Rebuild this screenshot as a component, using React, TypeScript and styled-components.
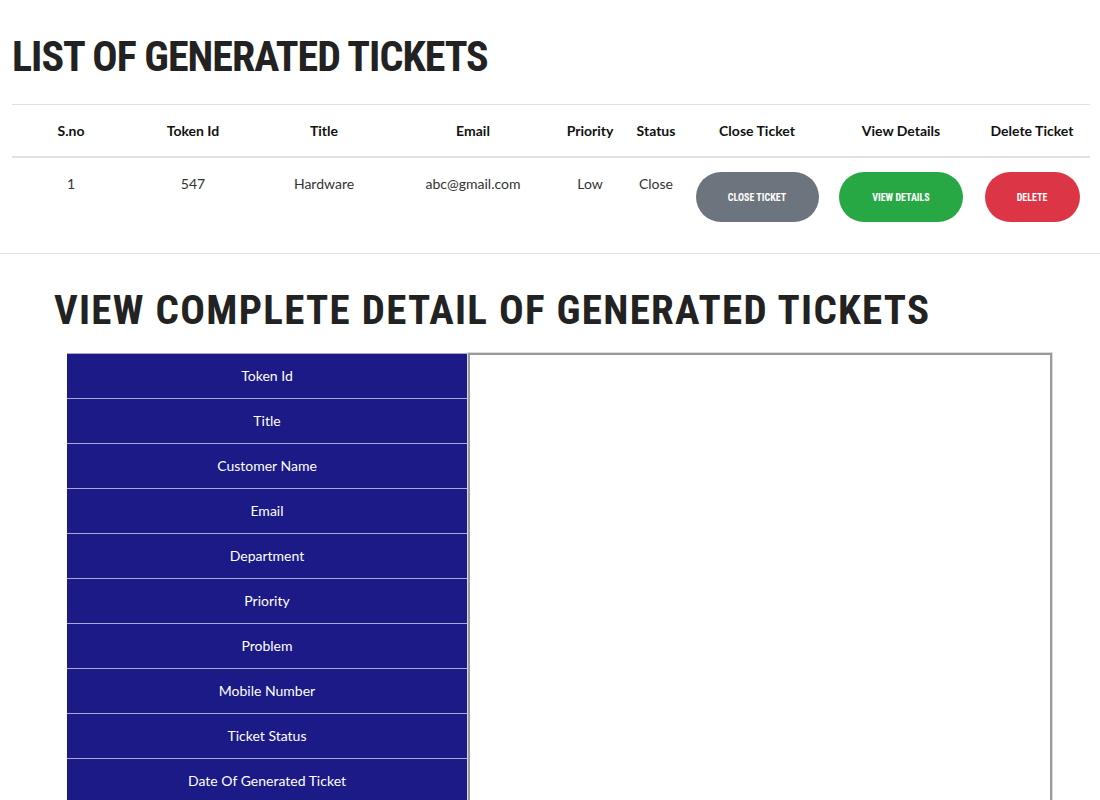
import React from 'react';
import styled, { createGlobalStyle } from 'styled-components';

const GlobalStyle = createGlobalStyle`
	body {
		margin: 0;
		background: #fff;
		font-family: 'Lato', 'Noto Sans', sans-serif;
		color: #212529;
	}
	*, *::before, *::after {
		box-sizing: border-box;
	}
`;

const Page = styled.div`
	width: 1100px;
	overflow: hidden;
`;

const ListSection = styled.section`
	padding: 0 10px 0 12px;
`;

const Heading = styled.h1<{ $spacing?: number; $size: number }>`
	margin: 0;
	font-family: 'Roboto Condensed', 'Liberation Sans Narrow', 'DejaVu Sans Condensed', Roboto, sans-serif;
	font-weight: 700;
	font-size: ${(p) => p.$size}px;
	line-height: 1.2;
	letter-spacing: ${(p) => p.$spacing || 0}px;
	color: #222;
	text-transform: uppercase;
	white-space: nowrap;
`;

const ListHeading = styled(Heading)`
	margin: 32px 0 22px;
`;

const DetailHeading = styled(Heading)`
	margin: 32px 0 17px 54px;
`;

const Table = styled.table`
	width: 1078px;
	border-collapse: collapse;
	table-layout: fixed;
	border-top: 1px solid #dee2e6;
`;

const Th = styled.th<{ $w: number }>`
	width: ${(p) => p.$w}px;
	padding: 14px 2px 13px;
	font-size: 14px;
	line-height: 24px;
	font-weight: 700;
	text-align: center;
	border-bottom: 2px solid #dee2e6;
	color: #111;
`;

const Td = styled.td`
	padding: 14px 2px 31px;
	font-size: 14px;
	line-height: 24px;
	text-align: center;
	vertical-align: top;
	color: #333;
`;

const PillButton = styled.button<{ $bg: string; $w: number }>`
	width: ${(p) => p.$w}px;
	height: 50px;
	border: none;
	border-radius: 25px;
	background: ${(p) => p.$bg};
	color: #fff;
	font-family: 'Roboto Condensed', 'Liberation Sans Narrow', 'DejaVu Sans Condensed', Roboto, sans-serif;
	font-weight: 700;
	font-size: 10px;
	text-transform: uppercase;
	cursor: pointer;
`;

const Divider = styled.hr`
	margin: 0;
	border: none;
	border-top: 1px solid #e2e2e2;
`;

const DetailGrid = styled.div`
	display: grid;
	grid-template-columns: 400px 584px;
	gap: 1px;
	margin-left: 67px;
`;

const LabelColumn = styled.div`
	display: flex;
	flex-direction: column;
`;

const LabelCell = styled.div`
	height: 45px;
	display: flex;
	align-items: center;
	justify-content: center;
	background: #1b1a87;
	border-top: 1px solid #a9a9d6;
	color: #fff;
	font-size: 14px;
`;

const ValuePanel = styled.div`
	border: 2px solid #9a9a9a;
	box-shadow: 0 0 0 1px #dcdcdc;
	background: #fff;
`;

const columns = [
	{ label: 'S.no', w: 118 },
	{ label: 'Token Id', w: 126 },
	{ label: 'Title', w: 136 },
	{ label: 'Email', w: 162 },
	{ label: 'Priority', w: 72 },
	{ label: 'Status', w: 60 },
	{ label: 'Close Ticket', w: 142 },
	{ label: 'View Details', w: 146 },
	{ label: 'Delete Ticket', w: 116 },
];

const detailLabels = [
	'Token Id',
	'Title',
	'Customer Name',
	'Email',
	'Department',
	'Priority',
	'Problem',
	'Mobile Number',
	'Ticket Status',
	'Date Of Generated Ticket',
];

function App() {
	return (
		<Page>
			<GlobalStyle />
			<ListSection>
				<ListHeading $size={42} $spacing={-1}>
					List of Generated Tickets
				</ListHeading>
				<Table>
					<thead>
						<tr>
							{columns.map((c) => (
								<Th key={c.label} $w={c.w}>
									{c.label}
								</Th>
							))}
						</tr>
					</thead>
					<tbody>
						<tr>
							<Td>1</Td>
							<Td>547</Td>
							<Td>Hardware</Td>
							<Td>abc@gmail.com</Td>
							<Td>Low</Td>
							<Td>Close</Td>
							<Td>
								<PillButton $bg="#6c757d" $w={123}>
									Close Ticket
								</PillButton>
							</Td>
							<Td>
								<PillButton $bg="#28a745" $w={124}>
									View Details
								</PillButton>
							</Td>
							<Td>
								<PillButton $bg="#dc3545" $w={95}>
									Delete
								</PillButton>
							</Td>
						</tr>
					</tbody>
				</Table>
			</ListSection>
			<Divider />
			<DetailHeading $size={41} $spacing={1.3}>
				View Complete Detail of Generated Tickets
			</DetailHeading>
			<DetailGrid>
				<LabelColumn>
					{detailLabels.map((l) => (
						<LabelCell key={l}>{l}</LabelCell>
					))}
				</LabelColumn>
				<ValuePanel />
			</DetailGrid>
		</Page>
	);
}

export default App;
